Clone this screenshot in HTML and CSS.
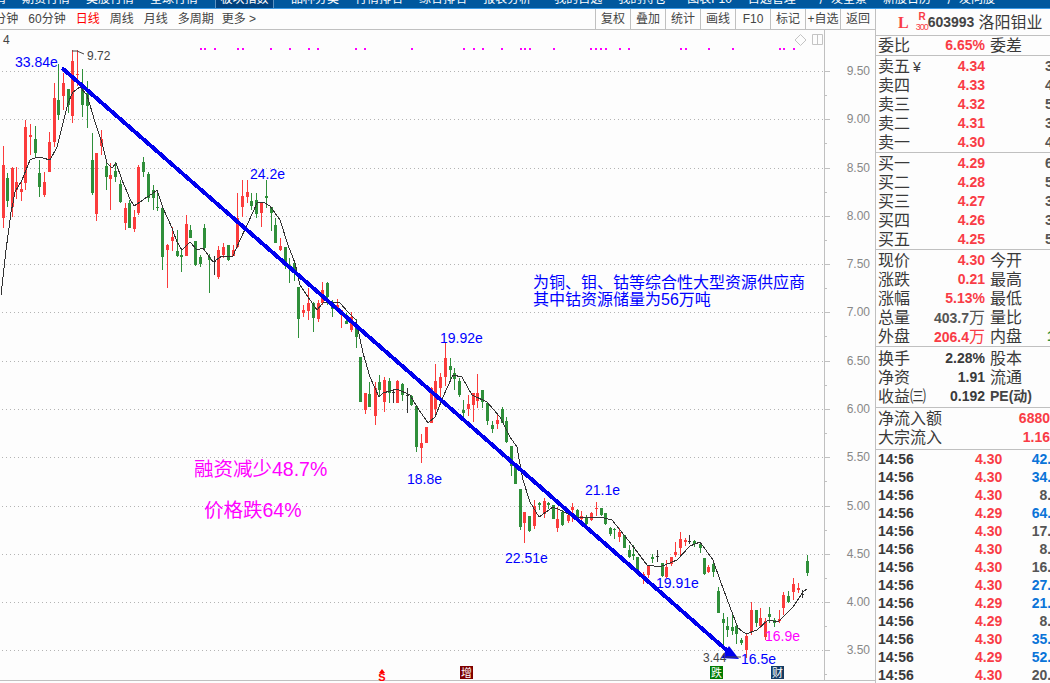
FILE: index.html
```html
<!DOCTYPE html>
<html lang="zh-CN">
<head>
  <meta charset="UTF-8" />
  <title>603993 洛阳钼业</title>
  <link rel="stylesheet" href="styles.css">
</head>
<body>
  <nav class="nav">
    <a class="first">基金行情</a>
    <a>期货行情</a>
    <a>美股行情</a>
    <a>全球行情</a>
    <a class="active">板块指数</a>
    <a class="gap">品种分类</a>
    <a>行情排名</a>
    <a>综合排名</a>
    <a>报表分析</a>
    <a class="gap">我的自选</a>
    <a>我的持仓</a>
    <a class="gap-s">图表F10</a>
    <a>自选管理</a>
    <a class="gap">广发全景</a>
    <a>新股日历</a>
    <a>广发问股</a>
  </nav>

  <div class="container">
    <div class="left">
      <div class="toolbar">
        <div class="tabs">
          <span>30分钟</span>
          <span>60分钟</span>
          <span class="on">日线</span>
          <span>周线</span>
          <span>月线</span>
          <span>多周期</span>
          <span class="more">更多 &gt;</span>
        </div>
        <div class="btns">
          <button>复权</button>
          <button>叠加</button>
          <button>统计</button>
          <button>画线</button>
          <button>F10</button>
          <button>标记</button>
          <button>+自选</button>
          <button>返回</button>
        </div>
      </div>

      <svg class="chart" width="875" height="653" viewBox="0 30 875 653">
        <g id="grid"></g>
        <g id="dots"></g>
        <g id="candles"></g>
        <polyline id="ma" class="ma" points=""></polyline>

        <!-- 趋势线 -->
        <line class="trend" x1="62" y1="68" x2="731" y2="654"></line>
        <polygon class="trend-head" points="729,646 739,659 721,658"></polygon>
        <path class="leader" d="M72 51h5l7 3M726 657h15"></path>

        <text class="t-gray" x="3" y="44">4</text>
        <text class="t-dark" x="87" y="60">9.72</text>
        <text class="t-dark" x="703" y="662">3.44</text>

        <text class="t-blue" x="15" y="67">33.84e</text>
        <text class="t-blue" x="250" y="179">24.2e</text>
        <text class="t-blue" x="440" y="343">19.92e</text>
        <text class="t-blue" x="407" y="484">18.8e</text>
        <text class="t-blue" x="585" y="495">21.1e</text>
        <text class="t-blue" x="505" y="563">22.51e</text>
        <text class="t-blue" x="656" y="588">19.91e</text>
        <text class="t-blue" x="741" y="664">16.5e</text>
        <text class="t-pink" x="765" y="641">16.9e</text>

        <text class="t-note" x="533" y="288">为铜、钼、钴等综合性大型资源供应商</text>
        <text class="t-note" x="533" y="305">其中钴资源储量为56万吨</text>
        <text class="t-big" x="194" y="476">融资减少48.7%</text>
        <text class="t-big" x="204" y="517">价格跌64%</text>

        <!-- 右上角小图标 -->
        <path class="ico" d="M800.500 34.500l5.500 5.500-5.500 5.500-5.500-5.500z"></path>
        <path class="ico" d="M812.500 34.500h10v10h-10zM817.500 34.500v10"></path>

        <!-- 底部事件标记 -->
        <polygon class="mark-s" points="382,669 385,673 379,673"></polygon>
        <text class="mark-s-txt" x="382" y="681">S</text>
        <rect class="box-red" x="460" y="666" width="13" height="13"></rect>
        <text class="box-txt" x="466.500" y="677">增</text>
        <rect class="box-green" x="710" y="666" width="13" height="13"></rect>
        <text class="box-txt" x="716.500" y="677">跌</text>
        <rect class="box-navy" x="771" y="666" width="13" height="13"></rect>
        <text class="box-txt" x="777.500" y="677">财</text>
      </svg>
    </div>

    <aside class="side">
      <div class="title">
        <span class="t-l">L</span>
        <span class="t-r"><b>R</b><i>300</i></span>
        <span class="t-code">603993</span>
        <span class="t-name">洛阳钼业</span>
      </div>

      <div class="block rate">
        <div class="row"><div class="pair"><span>委比</span><b class="red">6.65%</b></div><span class="c3">委差</span></div>
      </div>

      <div class="block orders">
        <div class="row"><div class="pair"><span>卖五<em class="yen">¥</em></span><b class="red">4.34</b></div><b class="c4">312</b></div>
        <div class="row"><div class="pair"><span>卖四</span><b class="red">4.33</b></div><b class="c4">421</b></div>
        <div class="row"><div class="pair"><span>卖三</span><b class="red">4.32</b></div><b class="c4">586</b></div>
        <div class="row"><div class="pair"><span>卖二</span><b class="red">4.31</b></div><b class="c4">327</b></div>
        <div class="row"><div class="pair"><span>卖一</span><b class="red">4.30</b></div><b class="c4">449</b></div>
      </div>

      <div class="block orders">
        <div class="row"><div class="pair"><span>买一</span><b class="red">4.29</b></div><b class="c4">631</b></div>
        <div class="row"><div class="pair"><span>买二</span><b class="red">4.28</b></div><b class="c4">522</b></div>
        <div class="row"><div class="pair"><span>买三</span><b class="red">4.27</b></div><b class="c4">318</b></div>
        <div class="row"><div class="pair"><span>买四</span><b class="red">4.26</b></div><b class="c4">365</b></div>
        <div class="row"><div class="pair"><span>买五</span><b class="red">4.25</b></div><b class="c4">574</b></div>
      </div>

      <div class="block orders">
        <div class="row"><div class="pair"><span>现价</span><b class="red">4.30</b></div><span class="c3">今开</span></div>
        <div class="row"><div class="pair"><span>涨跌</span><b class="red">0.21</b></div><span class="c3">最高</span></div>
        <div class="row"><div class="pair"><span>涨幅</span><b class="red">5.13%</b></div><span class="c3">最低</span></div>
        <div class="row"><div class="pair"><span>总量</span><b class="gray">403.7<small>万</small></b></div><span class="c3">量比</span></div>
        <div class="row"><div class="pair"><span>外盘</span><b class="red">206.4<small>万</small></b></div><span class="c3">内盘</span><b class="c5">197</b></div>
      </div>

      <div class="block stats">
        <div class="row"><div class="pair"><span>换手</span><b class="ink">2.28%</b></div><span class="c3">股本</span></div>
        <div class="row"><div class="pair"><span>净资</span><b class="ink">1.91</b></div><span class="c3">流通</span></div>
        <div class="row"><div class="pair"><span>收益㈢</span><b class="ink">0.192</b></div><span class="c3 pe">PE(动)</span></div>
      </div>

      <div class="block flow">
        <div class="row wide"><span>净流入额</span><b class="red">6880</b></div>
        <div class="row wide"><span>大宗流入</span><b class="red">1.16</b></div>
      </div>

      <div class="ticks">
        <div class="tick"><b class="time">14:56</b><b class="price">4.30</b><b class="vol blue">42.1</b></div>
        <div class="tick"><b class="time">14:56</b><b class="price">4.30</b><b class="vol blue">34.5</b></div>
        <div class="tick"><b class="time">14:56</b><b class="price">4.30</b><b class="vol">8.2</b></div>
        <div class="tick"><b class="time">14:56</b><b class="price">4.29</b><b class="vol blue">64.3</b></div>
        <div class="tick"><b class="time">14:56</b><b class="price">4.30</b><b class="vol">17.6</b></div>
        <div class="tick"><b class="time">14:56</b><b class="price">4.30</b><b class="vol">8.4</b></div>
        <div class="tick"><b class="time">14:56</b><b class="price">4.30</b><b class="vol">16.2</b></div>
        <div class="tick"><b class="time">14:56</b><b class="price">4.30</b><b class="vol blue">27.8</b></div>
        <div class="tick"><b class="time">14:56</b><b class="price">4.29</b><b class="vol blue">21.3</b></div>
        <div class="tick"><b class="time">14:56</b><b class="price">4.29</b><b class="vol">8.1</b></div>
        <div class="tick"><b class="time">14:56</b><b class="price">4.30</b><b class="vol blue">35.7</b></div>
        <div class="tick"><b class="time">14:56</b><b class="price">4.29</b><b class="vol blue">52.6</b></div>
        <div class="tick"><b class="time">14:56</b><b class="price">4.30</b><b class="vol">20.4</b></div>
      </div>
    </aside>
  </div>

  <script src="chart.js"></script>
</body>
</html>
```

FILE: styles.css
```css
* {
  box-sizing: border-box;
  margin: 0;
  padding: 0;
}
body {
  font-family: "Liberation Sans", "Noto Sans CJK SC", sans-serif;
  width: 1050px;
  height: 683px;
  overflow: hidden;
  background: #fdfdfd;
  color: #333;
}

.nav {
  height: 9px;
  display: flex;
  overflow: hidden;
  background: #00589e;
  border-bottom: 1px solid #3c9be6;
  font-size: 12px;
  line-height: 12px;
  color: #fff;
  white-space: nowrap;
}
.nav a {
  flex: none;
  padding: 0 8px;
  margin-top: -7px;
  height: 20px;
}
.nav .first {
  margin-left: -50px;
}
.nav .active {
  background: #00427f;
  margin-left: 9px;
  padding: 0 4.5px;
  height: 28px;
  border-left: 1px solid #5d93c2;
  border-right: 1px solid #5d93c2;
}
.nav .gap {
  margin-left: 7px;
}
.nav .gap-s {
  margin-left: 5px;
}
.nav .active + .gap {
  margin-left: 9px;
}

.container {
  display: flex;
  height: 674px;
}
.left {
  width: 875px;
  flex: none;
}

.toolbar {
  height: 21px;
  display: flex;
  justify-content: space-between;
  border-bottom: 1px solid #c0c0c0;
  font-size: 12px;
  line-height: 20px;
  color: #444;
}
.tabs {
  display: flex;
  gap: 10px;
  margin-left: -19px;
  white-space: nowrap;
}
.tabs .on {
  color: #f00;
}
.tabs .more {
  margin-left: -2px;
}
.btns {
  display: flex;
}
.btns button {
  width: 35px;
  height: 20px;
  border: none;
  border-left: 1px solid #c0c0c0;
  background: none;
  font: inherit;
  color: inherit;
  white-space: nowrap;
}

.chart {
  display: block;
}
.grid-line {
  stroke: #b4b4b4;
  stroke-dasharray: 1 3;
}
.axis {
  fill: #c0c0c0;
}
.axis-label {
  font-size: 12px;
  fill: #888;
  text-anchor: end;
}
.up {
  fill: #fb3c3c;
}
.down {
  fill: #2f8f3a;
}
.flat {
  fill: #333;
}
.dot {
  fill: #f0f;
}
.ma {
  fill: none;
  stroke: #333;
  stroke-width: 1;
  shape-rendering: crispEdges;
}
.trend {
  stroke: #0000ee;
  stroke-width: 4;
  shape-rendering: crispEdges;
}
.trend-head {
  fill: #0000ee;
}
.leader {
  fill: none;
  stroke: #444;
}
.ico {
  fill: none;
  stroke: #c4c4c4;
}
.t-gray,
.t-dark {
  font-size: 12px;
  fill: #444;
}
.t-blue {
  font-size: 14px;
  fill: #0000ff;
}
.t-pink {
  font-size: 14px;
  fill: #ff00ff;
}
.t-note {
  font-size: 16px;
  fill: #0000ff;
}
.t-big {
  font-size: 19.500px;
  fill: #ff00ff;
}
.mark-s {
  fill: #f00;
}
.mark-s-txt {
  font-size: 11px;
  font-weight: bold;
  fill: #f00;
  text-anchor: middle;
}
.box-red {
  fill: #7d0000;
}
.box-green {
  fill: #007a00;
}
.box-navy {
  fill: #143c64;
}
.box-txt {
  font-size: 11px;
  fill: #fff;
  text-anchor: middle;
}

.side {
  width: 175px;
  flex: none;
  overflow: hidden;
  border-left: 1px solid #c0c0c0;
  padding-left: 2px;
  font-size: 16px;
  line-height: 19px;
  color: #3a3a3a;
}
.title {
  height: 27px;
  margin-left: -2px;
  display: flex;
  align-items: center;
  border-bottom: 1px solid #c0c0c0;
  padding-left: 22px;
}
.t-l {
  font-family: "Liberation Serif", serif;
  font-weight: bold;
  font-size: 16px;
  color: #f93c46;
  margin-right: 7px;
}
.t-r {
  display: flex;
  flex-direction: column;
  align-items: center;
  width: 12px;
  font-size: 9px;
  line-height: 10px;
  letter-spacing: -1px;
  color: #f93c46;
}
.t-r b {
  font-size: 10px;
}
.t-r i {
  font-style: normal;
}
.t-code {
  font-size: 14px;
  font-weight: bold;
  color: #444;
}
.t-name {
  margin-left: 4px;
}

.block {
  margin-left: -2px;
  padding-left: 2px;
  border-bottom: 1px solid #c0c0c0;
}
.rate {
  height: 20px;
}
.orders {
  height: 97px;
  padding-top: 1px;
}
.stats {
  height: 61px;
  padding-top: 2px;
}
.flow {
  height: 42px;
  padding-top: 1px;
}

.row {
  display: flex;
  height: 19px;
  white-space: nowrap;
}
.pair {
  width: 107px;
  flex: none;
  display: flex;
  justify-content: space-between;
}
.row b {
  font-size: 14px;
}
.row small {
  font-size: 16px;
  font-weight: normal;
}
.yen {
  font-style: normal;
  font-size: 14px;
  margin-left: 3px;
}
.c3 {
  margin-left: 5px;
  width: 32px;
  flex: none;
}
.pe {
  width: 60px;
  font-size: 14px;
  font-weight: bold;
  color: #444;
}
.c4 {
  margin-left: 60px;
  color: #555;
}
.c5 {
  margin-left: 25px;
  color: #2f8f3a;
}
.wide {
  justify-content: space-between;
}
.red {
  color: #f93c46;
}
.gray {
  color: #555;
}
.ink {
  color: #3a3a3a;
}

.tick {
  display: flex;
  height: 18px;
  font-size: 14px;
  line-height: 18px;
  white-space: nowrap;
}
.time {
  width: 97px;
  flex: none;
  color: #3a3a3a;
}
.price {
  width: 26px;
  flex: none;
  color: #f93c46;
  text-align: right;
}
.vol {
  width: 58px;
  flex: none;
  color: #555;
  text-align: right;
}
.vol.blue {
  color: #0a74d8;
}
```

FILE: chart.js
```js
// 日K数据: [x, 颜色, 最高, 实体上沿, 实体下沿, 最低], 全部是像素坐标
const K = [
  [3,'r',146,165,218,228],[7,'g',173,178,201,207],[12,'r',167,168,207,217],[16,'r',167,182,190,199],
  [21,'r',180,189,192,201],[25,'r',120,127,183,190],[30,'r',124,135,137,155],[35,'g',126,139,153,157],
  [39,'g',160,173,187,197],[44,'r',172,182,195,197],[49,'r',132,142,172,172],[54,'r',83,98,142,147],
  [58,'g',64,100,115,120],[63,'r',73,83,96,110],[68,'g',89,89,105,113],[72,'r',50,61,116,123],
  [77,'r',50,74,75,86],[82,'g',69,88,105,117],[87,'g',81,93,106,128],[92,'g',133,160,193,195],
  [96,'r',153,153,214,221],[101,'r',130,139,146,155],[106,'g',162,166,177,190],[110,'r',163,175,179,210],
  [115,'g',162,171,177,182],[120,'g',180,184,202,203],[125,'r',203,208,223,230],[129,'g',200,203,228,228],
  [134,'r',210,217,229,232],[138,'r',165,167,213,215],[143,'g',157,162,172,177],[148,'g',172,174,198,202],
  [153,'g',185,190,198,210],[157,'g',190,207,208,211],[162,'g',208,208,257,270],[167,'r',244,245,250,288],
  [172,'r',227,237,241,251],[177,'g',230,251,256,257],[181,'g',248,255,257,272],[186,'r',215,224,256,256],
  [190,'g',225,230,238,238],[195,'g',241,241,265,266],[200,'g',255,257,264,267],[204,'g',224,228,248,250],
  [209,'g',254,257,260,293],[214,'d',256,261,262,275],[218,'r',246,250,277,279],[223,'r',243,247,255,258],
  [228,'g',245,245,260,261],[233,'r',245,250,256,256],[237,'r',193,218,247,248],[242,'r',180,196,207,217],
  [247,'r',180,192,197,203],[251,'g',193,201,206,210],[256,'g',193,200,214,218],[261,'r',202,203,213,227],
  [266,'g',180,196,198,208],[271,'g',207,207,213,231],[275,'g',218,225,243,243],[280,'r',238,246,250,251],
  [285,'g',247,247,265,269],[289,'g',258,265,269,283],[294,'g',263,263,271,281],[298,'g',287,287,319,338],
  [303,'r',305,310,313,317],[308,'r',288,303,311,320],[313,'g',302,303,318,332],[318,'r',300,303,319,322],
  [322,'r',282,290,303,305],[327,'g',282,283,297,305],[332,'g',300,305,309,317],[337,'r',299,305,311,312],
  [341,'r',310,310,313,328],[346,'g',313,321,324,324],[351,'r',312,317,330,332],[356,'g',319,327,337,348],
  [360,'g',357,357,402,402],[365,'r',393,393,410,414],[369,'g',382,394,407,407],[375,'r',382,388,416,425],
  [379,'g',375,382,390,397],[384,'r',377,380,402,412],[389,'g',378,381,393,403],[393,'d',390,392,393,403],
  [397,'r',380,381,403,403],[402,'g',383,384,395,401],[407,'d',388,395,396,413],[411,'g',395,396,405,406],
  [416,'g',406,406,447,452],[421,'r',434,443,448,463],[426,'r',427,427,443,443],[431,'r',387,388,423,423],
  [435,'r',364,381,409,417],[440,'r',373,377,388,398],[445,'r',342,358,377,386],[450,'g',358,366,370,379],
  [454,'g',368,373,379,390],[459,'g',378,381,395,397],[463,'g',400,410,413,418],[468,'r',395,404,409,416],
  [473,'r',393,393,405,422],[477,'r',374,393,401,408],[482,'g',390,390,402,408],[487,'g',403,403,421,425],
  [492,'g',421,425,429,433],[497,'r',414,420,424,429],[502,'g',407,409,423,423],[506,'g',417,421,442,443],
  [511,'g',446,446,466,476],[515,'g',463,463,484,484],[520,'g',489,489,527,530],[524,'r',512,512,523,543],
  [529,'g',516,516,531,532],[534,'r',500,506,526,529],[539,'g',502,503,505,510],[544,'r',498,501,514,518],
  [548,'g',502,503,505,509],[553,'g',505,505,519,519],[557,'r',507,519,528,532],[562,'g',510,512,525,526],
  [568,'r',509,515,521,523],[572,'r',503,507,510,522],[577,'g',509,510,520,522],[581,'r',511,516,519,522],
  [586,'g',515,517,524,525],[591,'r',512,513,520,521],[596,'r',502,508,509,516],[601,'g',508,508,515,516],
  [605,'g',513,513,524,525],[610,'g',527,528,534,536],[614,'g',528,529,530,539],[619,'r',528,532,537,542],
  [624,'g',535,535,548,548],[629,'g',545,550,557,558],[633,'g',545,554,556,560],[637,'g',557,557,572,573],
  [643,'r',572,574,579,584],[648,'r',566,566,575,578],[652,'g',554,557,559,563],[657,'d',550,556,557,562],
  [662,'g',563,563,576,577],[666,'r',560,567,577,578],[671,'r',557,557,564,566],[675,'r',542,552,555,557],
  [680,'r',532,539,548,557],[685,'r',538,540,542,546],[689,'d',535,541,542,544],[694,'g',540,541,544,547],
  [700,'g',542,544,548,553],[704,'g',558,558,574,575],[708,'r',565,567,572,573],[713,'g',563,564,572,577],
  [718,'g',587,591,613,613],[723,'g',613,619,623,647],[727,'g',617,626,630,637],[732,'g',615,627,631,635],
  [736,'g',623,626,634,644],[741,'g',638,640,643,645],[746,'r',633,636,650,658],[751,'r',602,610,632,635],
  [756,'g',610,610,623,627],[760,'r',608,618,626,628],[765,'r',618,621,637,640],[769,'g',607,614,617,623],
  [774,'g',618,620,623,627],[779,'r',610,619,621,623],[783,'r',592,595,608,615],[788,'g',591,596,602,603],
  [793,'r',578,584,592,600],[798,'r',583,588,590,593],[802,'d',590,594,595,598],[807,'g',555,561,573,576]
];

const MA = [
  [1,295],[6,250],[9,228],[11,212],[13,203],[15,192],[22,180],[30,160],[37,157],[43,158],[50,160],[57,147],
  [63,123],[68,103],[73,92],[80,87],[87,95],[95,122],[102,143],[107,163],[112,168],[116,163],[122,180],
  [130,199],[134,206],[140,202],[147,197],[152,194],[157,190],[163,208],[172,228],[177,242],[182,250],
  [190,242],[197,250],[203,248],[213,262],[222,256],[233,256],[240,240],[248,223],[257,203],[263,202],
  [270,206],[280,220],[288,245],[295,263],[300,285],[308,297],[317,310],[323,303],[333,302],[340,303],
  [348,312],[356,320],[363,353],[370,377],[379,397],[383,393],[397,389],[410,395],[417,407],[428,423],
  [435,417],[443,397],[453,375],[462,377],[472,395],[487,402],[500,417],[510,437],[517,447],[521,470],
  [523,480],[530,502],[539,517],[553,507],[560,510],[575,517],[600,517],[612,520],[620,530],[632,545],
  [647,565],[660,567],[677,560],[690,546],[700,542],[713,560],[720,580],[730,607],[738,628],[746,634],
  [757,630],[768,620],[778,622],[793,607],[803,592],[807,589]
];

const DOTS = [200,204,214,237,242,270,289,308,317,355,364,411,463,473,482,501,520,524,529,553,590,595,600,605,
  619,628,680,685,708,732,779,783,793];

const COLOR = { r: 'up', g: 'down', d: 'flat' };

let candles = '';
K.forEach(function (k) {
  const cls = COLOR[k[1]];
  const x = k[0];
  candles += '<rect class="' + cls + '" x="' + x + '" y="' + k[2] + '" width="1" height="' + (k[5] - k[2]) + '"></rect>';
  candles += '<rect class="' + cls + '" x="' + (x - 1) + '" y="' + k[3] + '" width="3" height="' + Math.max(k[4] - k[3], 1) + '"></rect>';
});
document.getElementById('candles').innerHTML = candles;

document.getElementById('ma').setAttribute('points', MA.map(function (p) { return p.join(','); }).join(' '));

document.getElementById('dots').innerHTML = DOTS.map(function (x) {
  return '<rect class="dot" x="' + x + '" y="48" width="2" height="2"></rect>';
}).join('');

// 价格轴: 每 0.5 元一条网格线
let grid = '<rect class="axis" x="824" y="30" width="1" height="651"></rect>';
grid += '<rect class="axis" x="0" y="680" width="875" height="1"></rect>';
for (let i = 0; i < 13; i++) {
  const y = Math.round(71 + i * 48.29);
  const label = (9.5 - i * 0.5).toFixed(2);
  grid += '<line class="grid-line" x1="2" y1="' + (y + 0.5) + '" x2="824" y2="' + (y + 0.5) + '"></line>';
  grid += '<rect class="axis" x="824" y="' + y + '" width="6" height="1"></rect>';
  grid += '<rect class="axis" x="824" y="' + (y + 24) + '" width="3" height="1"></rect>';
  grid += '<text class="axis-label" x="870" y="' + (y + 4) + '">' + label + '</text>';
}
document.getElementById('grid').innerHTML = grid;
```
